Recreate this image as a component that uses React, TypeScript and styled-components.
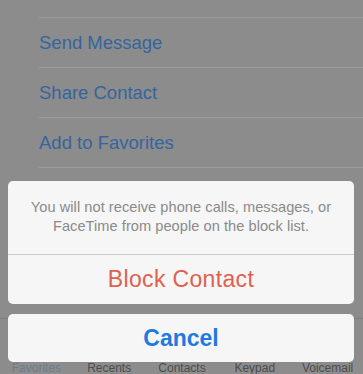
import React from "react";
import styled, { createGlobalStyle } from "styled-components";

const Global = createGlobalStyle`
  html, body { margin: 0; padding: 0; }
  body { background: #8c8c8c; font-family: "Liberation Sans", Arial, sans-serif; }
  #root { width: 363px; height: 374px; overflow: hidden; }
`;

const Screen = styled.div`
  position: relative;
  width: 363px;
  height: 374px;
  overflow: hidden;
  background: #8c8c8c;
  display: flex;
  flex-direction: column;
`;

const List = styled.div`
  flex: 1;
  display: flex;
  flex-direction: column;
  padding-left: 39px;
  padding-top: 17px;
`;

const Row = styled.div`
  height: 50px;
  box-sizing: border-box;
  border-top: 1px solid #9c9c9c;
  display: flex;
  align-items: center;
  font-size: 18.5px;
  color: #36649f;
  padding-top: 1px;
`;

const TabBar = styled.div`
  height: 56px;
  box-sizing: border-box;
  border-top: 1px solid #7c7c7c;
  display: grid;
  grid-template-columns: repeat(5, 72.8px);
  align-items: end;
  padding-left: 0;
`;

const TabLabel = styled.div<{ $active?: boolean }>`
  text-align: center;
  font-size: 12px;
  line-height: 13px;
  margin-bottom: -1px;
  color: ${(p) => (p.$active ? "#6f7c8c" : "#4c4c4c")};
`;

const Sheet = styled.div`
  position: absolute;
  left: 8px;
  right: 9px;
  top: 181px;
  display: flex;
  flex-direction: column;
  gap: 10px;
`;

const Card = styled.div`
  background: #f6f6f6;
  border-radius: 5px;
  overflow: hidden;
  display: flex;
  flex-direction: column;
`;

const Message = styled.div`
  height: 74px;
  box-sizing: border-box;
  border-bottom: 1px solid #c9c9c9;
  display: flex;
  align-items: center;
  justify-content: center;
  text-align: center;
  font-size: 14.6px;
  letter-spacing: 0.05px;
  line-height: 19px;
  color: #8a8a8a;
  padding: 0 4px 2px;
  white-space: nowrap;
`;

const Action = styled.div<{ $tone: "destructive" | "cancel" }>`
  height: ${(p) => (p.$tone === "cancel" ? "48px" : "49px")};
  display: flex;
  align-items: center;
  justify-content: center;
  font-size: 23px;
  letter-spacing: ${(p) => (p.$tone === "cancel" ? "0" : "0.35px")};
  font-weight: ${(p) => (p.$tone === "cancel" ? 700 : 400)};
  color: ${(p) => (p.$tone === "cancel" ? "#1f7ae0" : "#e0604f")};
`;

export default function App() {
  return (
    <>
      <Global />
      <Screen>
        <List>
          <Row>Send Message</Row>
          <Row>Share Contact</Row>
          <Row>Add to Favorites</Row>
          <Row />
        </List>
        <TabBar>
          <TabLabel $active>Favorites</TabLabel>
          <TabLabel>Recents</TabLabel>
          <TabLabel>Contacts</TabLabel>
          <TabLabel>Keypad</TabLabel>
          <TabLabel>Voicemail</TabLabel>
        </TabBar>
        <Sheet>
          <Card>
            <Message>
              You will not receive phone calls, messages, or
              <br />
              FaceTime from people on the block list.
            </Message>
            <Action $tone="destructive">Block Contact</Action>
          </Card>
          <Card>
            <Action $tone="cancel">Cancel</Action>
          </Card>
        </Sheet>
      </Screen>
    </>
  );
}
